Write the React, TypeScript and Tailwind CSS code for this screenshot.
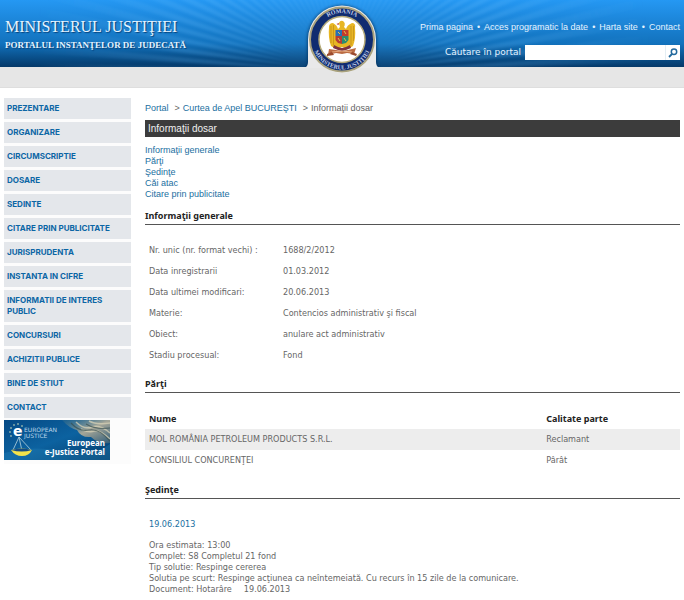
import React from "react";

const menu = [
  "PREZENTARE",
  "ORGANIZARE",
  "CIRCUMSCRIPTIE",
  "DOSARE",
  "SEDINTE",
  "CITARE PRIN PUBLICITATE",
  "JURISPRUDENTA",
  "INSTANTA IN CIFRE",
  "INFORMATII DE INTERES PUBLIC",
  "CONCURSURI",
  "ACHIZITII PUBLICE",
  "BINE DE STIUT",
  "CONTACT",
];

const sections = ["Informaţii generale", "Părţi", "Şedinţe", "Căi atac", "Citare prin publicitate"];

const details = [
  ["Nr. unic (nr. format vechi) :", "1688/2/2012"],
  ["Data inregistrarii", "01.03.2012"],
  ["Data ultimei modificari:", "20.06.2013"],
  ["Materie:", "Contencios administrativ şi fiscal"],
  ["Obiect:", "anulare act administrativ"],
  ["Stadiu procesual:", "Fond"],
];

const parties = [
  ["MOL ROMÂNIA PETROLEUM PRODUCTS S.R.L.", "Reclamant"],
  ["CONSILIUL CONCURENŢEI", "Pârât"],
];

const topLinks = ["Prima pagina", "Acces programatic la date", "Harta site", "Contact"];

function Rays() {
  const rays = Array.from({ length: 52 }, (_, i) => {
    const a = Math.PI + (i * Math.PI) / 52;
    const b = a + 0.03;
    const r = 460;
    return `M0 0L${(Math.cos(a) * r).toFixed(1)} ${(Math.sin(a) * r).toFixed(1)}L${(Math.cos(b) * r).toFixed(1)} ${(Math.sin(b) * r).toFixed(1)}Z`;
  });
  return (
    <svg className="absolute inset-0 h-full w-full" viewBox="-342 -72 684 67" preserveAspectRatio="xMidYMid slice" aria-hidden="true">
      <defs>
        <radialGradient id="rayFade" gradientUnits="userSpaceOnUse" cx="0" cy="0" r="310">
          <stop offset="0" stopColor="#6cc0ff" stopOpacity="0.15" />
          <stop offset="0.5" stopColor="#6cc0ff" stopOpacity="0.2" />
          <stop offset="1" stopColor="#6cc0ff" stopOpacity="0" />
        </radialGradient>
        <filter id="raySoft">
          <feGaussianBlur stdDeviation="0.8" />
        </filter>
      </defs>
      <path d={rays.join("")} fill="url(#rayFade)" filter="url(#raySoft)" />
    </svg>
  );
}

function Emblem() {
  return (
    <svg width="84" height="80" viewBox="0 0 84 80" role="img" aria-label="România, Ministerul Justiţiei">
      <defs>
        <path id="arcTop" d="M15.5 39.5A26.5 26.5 0 0 1 68.5 39.5" />
        <path id="arcBottom" d="M12 39.5A30 30 0 0 0 72 39.5" />
        <filter id="soft" x="-20%" y="-20%" width="140%" height="140%">
          <feGaussianBlur stdDeviation="1.5" />
        </filter>
      </defs>
      <path d="M5 68Q7 66 7 62V40A35 35 0 0 1 77 40V62Q77 66 79 68Z" fill="#062f5c" opacity="0.65" filter="url(#soft)" />
      <rect x="0" y="67" width="84" height="13" fill="#e6e6e6" />
      <path d="M4 68Q8 67 8 62V39.5A34 34 0 0 1 76 39.5V62Q76 67 80 68Z" fill="#e9e9ea" />
      <circle cx="42" cy="39.5" r="33" fill="#fff" />
      <circle cx="42" cy="39.5" r="32" fill="#102c70" stroke="#a9a27e" strokeWidth="2" />
      <circle cx="42" cy="39.5" r="23" fill="#fff" stroke="#b5aa79" strokeWidth="1.5" />
      <g className="font-['Liberation_Serif',serif] text-[6px] font-bold" fill="#c3cfe8" textAnchor="middle">
        <text>
          <textPath href="#arcTop" startOffset="50%">ROMANIA</textPath>
        </text>
        <text>
          <textPath href="#arcBottom" startOffset="50%">MINISTERUL JUSTIŢIEI</textPath>
        </text>
      </g>
      {/* eagle */}
      <path d="M39 23Q40 20 43 21Q46 23 44 27L46 29Q47 25 52 23Q56 23 55 28Q56 38 53 46L48 49L42 47L36 49L31 46Q28 38 29 27Q29 23 33 23Q37 25 38 29L40 27Z" fill="#e7b624" />
      <path d="M31 26v17M33.5 25v20M51 26v19M53.5 26v15" stroke="#c08b18" strokeWidth="0.7" fill="none" />
      <path d="M39 23l-2.5 1 2 1z" fill="#b5301f" />
      {/* shield */}
      <path d="M35.5 30H42v6h-6.5z" fill="#286fb5" />
      <path d="M42 30h6.5v6H42z" fill="#c43a2c" />
      <path d="M35.5 36H42v8l-4-1-2.5-3z" fill="#b43c35" />
      <path d="M42 36h6.5v4L46 43l-4 1z" fill="#2b8b72" />
      <path d="M38 32l2 2M44 31l2 3M38 38l2 3M44 38l2 3" stroke="#e5c24c" strokeWidth="1" />
      {/* scroll */}
      <path d="M34 45l4 2 4 1 4-1 4-2 1 3-5 2-4 1-4-1-5-2z" fill="#7f3140" />
      <path d="M29 49l7 1 6 1 6-1 8-2-2 6-7-1-5 1-6-1-8 2z" fill="#ba6b43" />
      <path d="M32 52l10-1 10 1" stroke="#efb88e" strokeWidth="0.8" fill="none" />
      <path d="M27 54l5-2 2 3-7 1zM57 54l-5-2-2 2 6 2z" fill="#9b4b2e" />
    </svg>
  );
}

function JusticeBanner() {
  return (
    <svg width="106" height="40" viewBox="0 0 106 40" className="block" role="img" aria-label="European e-Justice Portal">
      <defs>
        <linearGradient id="bannerBlue" x1="0" y1="0" x2="1" y2="1">
          <stop offset="0" stopColor="#064a85" />
          <stop offset="0.5" stopColor="#0c62a0" />
          <stop offset="1" stopColor="#053b68" />
        </linearGradient>
        <linearGradient id="stone" x1="0" y1="0" x2="1" y2="1">
          <stop offset="0" stopColor="#3b7289" stopOpacity="0.3" />
          <stop offset="0.5" stopColor="#a5a698" />
          <stop offset="1" stopColor="#315d79" />
        </linearGradient>
      </defs>
      <rect width="106" height="40" fill="url(#bannerBlue)" />
      <path d="M0 33Q30 25 60 31T106 24V40H0Z" fill="#2584b9" opacity="0.35" />
      <path d="M58 0H106V23Q94 24 87 17Q77 18 73 10Q65 8 58 0Z" fill="url(#stone)" />
      <path d="M72 2q8 8 16 5t18 6M77 9q8 4 13 2t16 8M85 1q7 4 21 2" stroke="#d6d0b6" strokeWidth="1.5" fill="none" opacity="0.75" />
      <path d="M67 3q8 9 18 7t21 11M82 4q10 6 24 4" stroke="#364f50" strokeWidth="1.2" fill="none" opacity="0.7" />
      <g fill="#dce9bb">
        <circle cx="6" cy="12" r="0.8" />
        <circle cx="7" cy="8" r="0.8" />
        <circle cx="10" cy="5" r="0.8" />
        <circle cx="14" cy="4" r="0.8" />
        <circle cx="18" cy="6" r="0.8" />
        <circle cx="7" cy="16" r="0.8" />
      </g>
      <path d="M15 17L9 30M15 17L27 30M15 17L18 31" stroke="#b8d3dd" strokeWidth="0.8" />
      <path d="M7 30Q18 27 28 30Q25 36 18 36T7 30Z" fill="#f3e34b" />
      <path d="M7 30Q18 27 28 30Q18 33 7 30Z" fill="#174c83" />
      <g className="font-['DejaVu_Sans',sans-serif]" fill="#fff">
        <text x="9" y="16" className="text-[14px] font-bold">e</text>
        <text x="20" y="12" className="text-[6px]" fill="#b9d7ea">EUROPEAN</text>
        <text x="20" y="18" className="text-[6px]" fill="#b9d7ea">JUSTICE</text>
      </g>
      <g className="font-['Noto_Sans',sans-serif] text-[8px] font-bold" fill="#fff" textAnchor="end">
        <text x="101" y="26">European</text>
        <text x="101" y="35">e-Justice Portal</text>
      </g>
    </svg>
  );
}

function SectionTitle({ id, children }: { id: string; children: React.ReactNode }) {
  return (
    <h2 id={id} className="border-b border-[#555] pt-px pb-px font-['Noto_Sans',sans-serif] text-[9px] leading-[14px] font-bold text-[#222]">
      {children}
    </h2>
  );
}

export default function App() {
  return (
    <div className="min-h-screen bg-white font-['DejaVu_Sans_Condensed','DejaVu_Sans',sans-serif] text-[9px] leading-[11px] text-[#666]">
      <header className="relative border-b border-[#dedede] bg-[#e6e6e6] pb-5">
        <div className="relative flex h-[67px] justify-between overflow-hidden bg-linear-to-b from-[#2598f3] via-[#1272bd] via-65% to-[#053969] pr-1 pl-[5px]">
          <Rays />
          <div className="relative pt-[17px] font-['Liberation_Serif',serif] text-[#e4f3ff] [text-shadow:1px_1px_1px_#07437b]">
            <h1 className="text-[16px] leading-[20px]">MINISTERUL JUSTIŢIEI</h1>
            <p className="text-[9px] leading-[16px] font-bold">PORTALUL INSTANŢELOR DE JUDECATĂ</p>
          </div>
          <div className="relative flex flex-col items-end pt-[22px] text-[#e4f3ff]">
            <nav className="flex gap-1 font-['Liberation_Sans',sans-serif]">
              {topLinks.map((l, i) => (
                <React.Fragment key={l}>
                  {i > 0 && <span>•</span>}
                  <a href="#">{l}</a>
                </React.Fragment>
              ))}
            </nav>
            <form className="mt-3 flex items-center gap-1" onSubmit={(e) => e.preventDefault()}>
              <label htmlFor="search" className="font-['DejaVu_Sans',sans-serif]">
                Căutare în portal
              </label>
              <div className="flex h-[15px] bg-white">
                <input id="search" type="text" className="w-[140px] px-1 text-[#333] outline-none" />
                <button type="submit" aria-label="Caută" className="flex w-[15px] items-center justify-center border-l border-[#e4eef4]">
                  <svg width="10" height="10" viewBox="0 0 10 10" fill="none" stroke="#23699d">
                    <circle cx="6" cy="3.8" r="2.7" strokeWidth="1.5" />
                    <path d="M4 6L1 9" strokeWidth="1.8" />
                  </svg>
                </button>
              </div>
            </form>
          </div>
        </div>
        <div className="absolute inset-x-0 top-0 flex justify-center">
          <Emblem />
        </div>
      </header>

      <div className="flex items-start gap-[14px] pt-[10px] pr-1 pl-1">
        <aside className="w-[127px] shrink-0 bg-[#fcfcfc] pb-1">
          <nav>
            <ul className="flex flex-col gap-[3px]">
              {menu.map((m) => (
                <li key={m}>
                  <a href="#" className="block bg-[#e4e7eb] py-[5px] pr-5 pl-[3px] font-['Inter',sans-serif] text-[8px] leading-[11px] font-bold text-[#0b66a5]">
                    {m}
                  </a>
                </li>
              ))}
            </ul>
          </nav>
          <a href="#" className="mt-[2px] block">
            <JusticeBanner />
          </a>
        </aside>

        <main className="min-w-0 flex-1">
          <nav className="flex gap-[6px] pt-[5px] font-['Liberation_Sans',sans-serif] whitespace-nowrap text-[#1b6f9f]">
            <a href="#">Portal</a>
            <span className="flex gap-[3px]">
              <span className="text-[#666]">&gt;</span>
              <a href="#">Curtea de Apel BUCUREŞTI</a>
            </span>
            <span className="flex gap-[3px] text-[#666]">
              <span>&gt;</span>
              <span>Informaţii dosar</span>
            </span>
          </nav>
          <h1 className="mt-[6px] bg-[#3c3c3c] pl-[3px] font-['Liberation_Sans',sans-serif] text-[10px] leading-[17px] text-[#f0f0f0]">Informaţii dosar</h1>
          <ul className="mt-2 font-['Liberation_Sans',sans-serif] text-[#1b6f9f]">
            {sections.map((s, i) => (
              <li key={s}>
                <a href={`#sectiune-${i}`}>{s}</a>
              </li>
            ))}
          </ul>

          <div className="mt-2">
            <SectionTitle id="sectiune-0">Informaţii generale</SectionTitle>
          </div>
          <table className="mt-[15px] w-full text-left">
            <tbody>
              {details.map(([k, v]) => (
                <tr key={k} className="h-[21px]">
                  <th scope="row" className="w-[138px] py-0 pl-1 font-normal">
                    {k}
                  </th>
                  <td>{v}</td>
                </tr>
              ))}
            </tbody>
          </table>

          <div className="mt-[10px]">
            <SectionTitle id="sectiune-1">Părţi</SectionTitle>
          </div>
          <table className="mt-[15px] w-full text-left">
            <thead className="font-['Noto_Sans',sans-serif] text-[#222]">
              <tr className="h-[21px]">
                <th className="w-3/4 pl-1">Nume</th>
                <th className="w-1/4">Calitate parte</th>
              </tr>
            </thead>
            <tbody>
              {parties.map(([n, q]) => (
                <tr key={n} className="h-[21px] odd:bg-[#ededed]">
                  <td className="pl-1">{n}</td>
                  <td>{q}</td>
                </tr>
              ))}
            </tbody>
          </table>

          <div className="mt-[11px]">
            <SectionTitle id="sectiune-2">Şedinţe</SectionTitle>
          </div>
          <div className="pt-5 pl-1">
            <a href="#" className="text-[#1b6f9f]">
              19.06.2013
            </a>
            <div className="mt-[10px]">
              <p>Ora estimata: 13:00</p>
              <p>Complet: S8 Completul 21 fond</p>
              <p>Tip solutie: Respinge cererea</p>
              <p>Solutia pe scurt: Respinge acţiunea ca neîntemeiată. Cu recurs în 15 zile de la comunicare.</p>
              <p className="flex gap-3">
                <span>Document: Hotarâre</span>
                <span>19.06.2013</span>
              </p>
            </div>
          </div>
        </main>
      </div>
    </div>
  );
}
